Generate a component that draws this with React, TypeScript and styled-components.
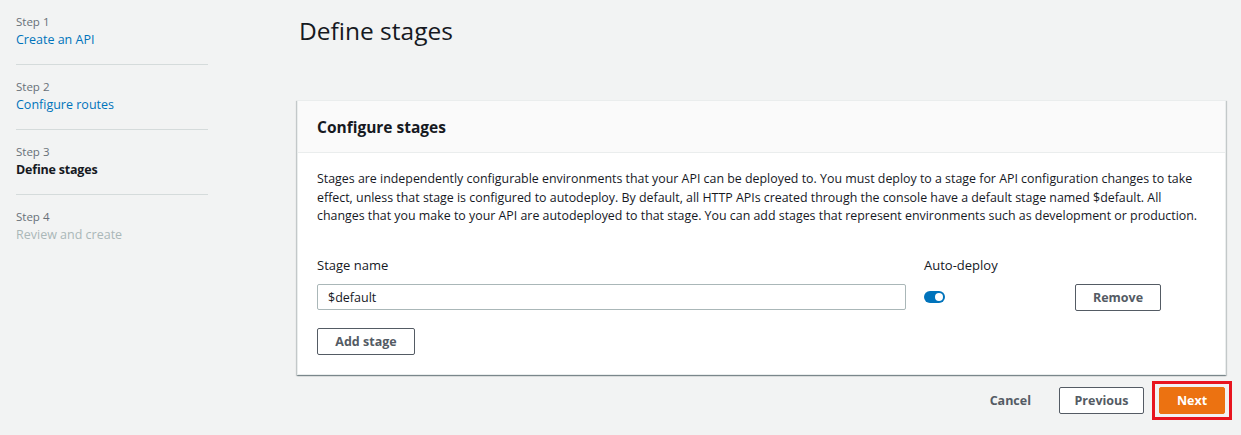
import React, { useState } from 'react';
import styled, { createGlobalStyle } from 'styled-components';

const GlobalStyle = createGlobalStyle`
    html, body {
        margin: 0;
        padding: 0;
        background: #f2f3f3;
        font-family: "Open Sans", "Liberation Sans", Arial, sans-serif;
        color: #16191f;
    }
    * { box-sizing: border-box; }
`;

const Page = styled.div`
    display: flex;
    width: 1241px;
    height: 435px;
    overflow: hidden;
`;

const Nav = styled.nav`
    width: 297px;
    flex-shrink: 0;
    padding: 14px 0 0 16px;
`;

const StepItem = styled.div<{ last?: boolean }>`
    width: 192px;
    padding: 0 0 14px;
    margin-bottom: 14px;
    border-bottom: ${p => (p.last ? 'none' : '1px solid #d5dbdb')};
`;

const StepLabel = styled.div`
    font-size: 11.5px;
    line-height: 16px;
    color: #687078;
`;

const StepTitle = styled.div<{ state: 'link' | 'current' | 'disabled' }>`
    font-size: 12.5px;
    line-height: 20px;
    font-weight: ${p => (p.state === 'current' ? 700 : 400)};
    letter-spacing: ${p => (p.state === 'current' ? '-0.2px' : '0')};
    color: ${p => (p.state === 'link' ? '#0073bb' : p.state === 'current' ? '#16191f' : '#aab7b8')};
`;

const Main = styled.main`
    flex: 1;
    padding: 14px 15px 0 0;
    display: flex;
    flex-direction: column;
`;

const Title = styled.h1`
    margin: 0 0 0 2px;
    font-size: 24.5px;
    font-weight: 400;
    line-height: 34px;
    color: #16191f;
`;

const Panel = styled.section`
    margin-top: 52px;
    background: #fff;
    border: 1px solid #eaeded;
    box-shadow: 0 1px 1px 0 rgba(0, 28, 36, 0.3), 1px 1px 1px 0 rgba(0, 28, 36, 0.15), -1px 1px 1px 0 rgba(0, 28, 36, 0.15);
`;

const PanelHeader = styled.div`
    height: 52px;
    background: #fafafa;
    border-bottom: 1px solid #eaeded;
    display: flex;
    align-items: center;
    padding: 0 19px;
`;

const PanelTitle = styled.h2`
    margin: 0;
    font-size: 15.5px;
    font-weight: 700;
    color: #16191f;
`;

const PanelBody = styled.div`
    padding: 17px 19px 19px;
`;

const Description = styled.p`
    margin: 0;
    font-size: 12.4px;
    line-height: 18.5px;
    color: #16191f;
`;

const StageGrid = styled.div`
    margin-top: 30px;
    display: grid;
    grid-template-columns: 589px 133px 86px;
    column-gap: 18px;
    row-gap: 10px;
    align-items: center;
`;

const FieldLabel = styled.label`
    font-size: 13px;
    line-height: 18px;
    color: #16191f;
`;

const TextInput = styled.input`
    height: 26px;
    width: 100%;
    border: 1px solid #aab7b8;
    border-radius: 2px;
    padding: 0 10px;
    font-family: inherit;
    font-size: 12.5px;
    color: #16191f;
    outline: none;
`;

const Toggle = styled.button<{ on: boolean }>`
    position: relative;
    display: block;
    width: 21px;
    height: 12px;
    padding: 0;
    border: none;
    border-radius: 6px;
    background: ${p => (p.on ? '#0073bb' : '#879596')};
    cursor: pointer;
    &::after {
        content: '';
        position: absolute;
        top: 2px;
        left: ${p => (p.on ? '11px' : '2px')};
        width: 8px;
        height: 8px;
        border-radius: 50%;
        background: #fff;
    }
`;

const Button = styled.button<{ primary?: boolean; w?: number }>`
    height: 27px;
    width: ${p => (p.w ? p.w + 'px' : 'auto')};
    padding: 0 8px;
    white-space: nowrap;
    border-radius: 2px;
    border: 1px solid ${p => (p.primary ? '#ec7211' : '#545b64')};
    background: ${p => (p.primary ? '#ec7211' : '#fff')};
    color: ${p => (p.primary ? '#fff' : '#545b64')};
    font-family: inherit;
    font-size: 12.5px;
    font-weight: 700;
    cursor: pointer;
`;

const LinkButton = styled.button`
    height: 27px;
    padding: 0 20px;
    border: none;
    background: transparent;
    color: #545b64;
    font-family: inherit;
    font-size: 12.5px;
    font-weight: 700;
    cursor: pointer;
`;

const AddRow = styled.div`
    margin-top: 17px;
    display: flex;
`;

const Footer = styled.div`
    margin-top: 12px;
    display: flex;
    justify-content: flex-end;
    align-items: center;
    gap: 8px;
    padding-right: 1px;
`;

const Highlight = styled.div`
    display: flex;
    padding: 3px 4px;
    border: 3px solid #e8151f;
    margin: -6px -7px -6px 0;
`;

const steps = [
    { label: 'Step 1', title: 'Create an API', state: 'link' as const },
    { label: 'Step 2', title: 'Configure routes', state: 'link' as const },
    { label: 'Step 3', title: 'Define stages', state: 'current' as const },
    { label: 'Step 4', title: 'Review and create', state: 'disabled' as const },
];

const App = () => {
    const [ stageName, setStageName ] = useState<string>('$default');
    const [ autoDeploy, setAutoDeploy ] = useState<boolean>(true);

    return (
        <>
            <GlobalStyle />
            <Page>
                <Nav>
                    {steps.map((s, i) => (
                        <StepItem key={s.label} last={i === steps.length - 1}>
                            <StepLabel>{s.label}</StepLabel>
                            <StepTitle state={s.state}>{s.title}</StepTitle>
                        </StepItem>
                    ))}
                </Nav>
                <Main>
                    <Title>Define stages</Title>
                    <Panel>
                        <PanelHeader>
                            <PanelTitle>Configure stages</PanelTitle>
                        </PanelHeader>
                        <PanelBody>
                            <Description>
                                Stages are independently configurable environments that your API can be deployed to. You must deploy to a stage for API configuration changes to take effect, unless that stage is configured to autodeploy. By default, all HTTP APIs created through the console have a default stage named $default. All changes that you make to your API are autodeployed to that stage. You can add stages that represent environments such as development or production.
                            </Description>
                            <StageGrid>
                                <FieldLabel>Stage name</FieldLabel>
                                <FieldLabel>Auto-deploy</FieldLabel>
                                <span />
                                <TextInput value={stageName} onChange={e => setStageName(e.target.value)} />
                                <div>
                                    <Toggle on={autoDeploy} onClick={() => setAutoDeploy(!autoDeploy)} aria-label='Auto-deploy' />
                                </div>
                                <Button w={86}>Remove</Button>
                            </StageGrid>
                            <AddRow>
                                <Button w={98}>Add stage</Button>
                            </AddRow>
                        </PanelBody>
                    </Panel>
                    <Footer>
                        <LinkButton>Cancel</LinkButton>
                        <Button w={85}>Previous</Button>
                        <Highlight>
                            <Button primary w={66}>Next</Button>
                        </Highlight>
                    </Footer>
                </Main>
            </Page>
        </>
    );
};

export default App;
